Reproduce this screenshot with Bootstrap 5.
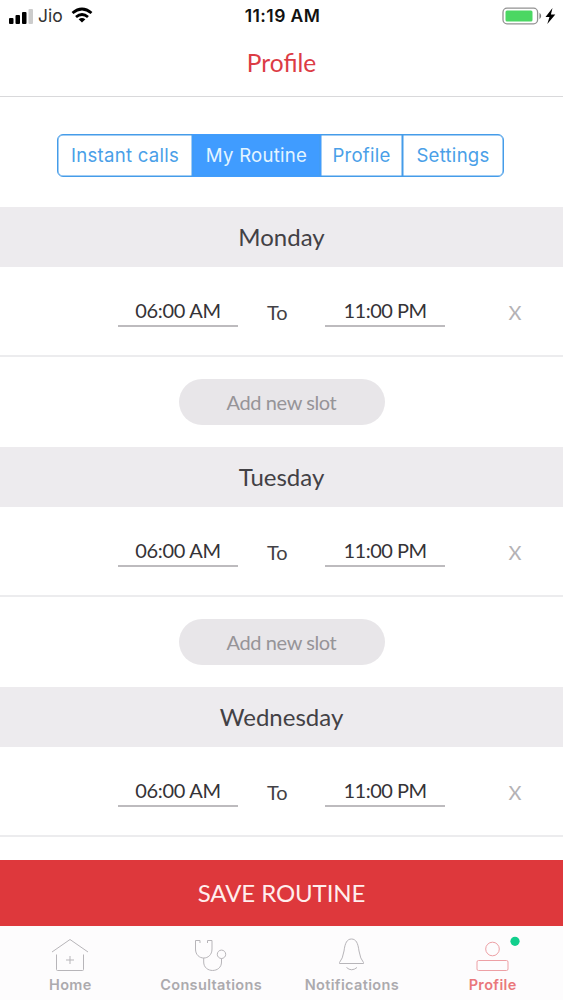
<!DOCTYPE html>
<html lang="en">
<head>
<meta charset="utf-8">
<meta name="viewport" content="width=device-width, initial-scale=1">
<title>Profile</title>
<link href="https://cdn.jsdelivr.net/npm/bootstrap@5.3.0/dist/css/bootstrap.min.css" rel="stylesheet">
<style>
body{height:1000px;font-family:Lato,sans-serif;color:#434145;background:#fff}
.status{height:31px;font-family:Inter,sans-serif;padding:0 7px 0 9px;color:#111;line-height:32px}
.status .side{width:130px}
.carrier{font-size:17.5px;color:#333}
.clock{font-size:17.5px;font-weight:600;letter-spacing:.4px;padding-right:0}
.title-bar{height:66px;border-bottom:1px solid #d9d9db;color:#dc3c45;font-size:24.5px;line-height:64px}
.segments{height:43px;margin:37px 60px 30px 57px;font-family:Inter,sans-serif}
.segments .btn{--bs-btn-color:#4a9fe8;--bs-btn-border-color:#459ce9;--bs-btn-active-color:#e4f5ff;--bs-btn-active-bg:#409cff;--bs-btn-active-border-color:#409cff;--bs-btn-border-radius:6px;--bs-btn-padding-x:0;--bs-btn-padding-y:0;font-size:18.6px;letter-spacing:.25px;line-height:39px;border-width:1.5px;box-shadow:inset 0 0 0 .5px #459ce9;flex:none;white-space:nowrap}
.day{height:60px;background:#edebee;font-size:24px;line-height:59px}
.slot{height:90px;border-bottom:2px solid #ececee;padding-left:118px;font-size:20px;line-height:28px}
.time{width:120px;height:31px;margin-top:1px;border-bottom:2px solid #bdbbbe;color:#353337;letter-spacing:-.3px}
.time + .to + .time{letter-spacing:-.5px}
.to{width:87px;padding-left:29px;padding-top:1px}
.remove{color:#b4b2b5;padding-left:63.5px;padding-top:1px}
.add-area{height:90px;padding-top:22px}
.add-area .btn{width:206px;height:46px;padding:0;background:#e8e6e9;color:#969498;font-size:20px;letter-spacing:-.4px;line-height:45px;border:0}
.save{height:66px;background:#de383c;color:#ffeeed;font-size:24px;letter-spacing:-.1px;line-height:66px;border-radius:0;border:0;padding:0}
.tabs{height:74px;background:#fdfcfd;font-family:Inter,sans-serif;font-size:14.5px;font-weight:600;color:#acaaae;letter-spacing:.35px}
.tabs a{color:inherit;text-decoration:none;padding-top:8px}
.tabs a.active{color:#ea777b}
.tabs svg{display:block;height:40px;width:48px;fill:none;stroke:#b7b5b9;stroke-width:1;overflow:visible}
.tabs a.active svg{stroke:#eda0a5}
.tabs span{line-height:22px}
</style>
</head>
<body class="d-flex flex-column overflow-hidden">
<header class="flex-shrink-0">
  <div class="status d-flex justify-content-between">
    <div class="side d-flex align-items-center">
      <svg width="25" height="16" viewBox="0 0 25 16"><rect y="10" width="4.5" height="6" rx="1"/><rect x="6.5" y="7" width="4.5" height="9" rx="1"/><rect x="13" y="4" width="4.5" height="12" rx="1"/><rect x="19.5" y="1" width="4.5" height="15" rx="1" fill="#ccc"/></svg>
      <span class="carrier ms-1">Jio</span>
      <svg class="ms-2" width="22" height="17" viewBox="0 0 22 17" fill="none" stroke="#000" stroke-width="2.8"><path d="M1.5 6Q11-2 20.5 6M5 10Q11 4.9 17 10"/><path d="M11 15.5 7.6 12.2Q11 9.6 14.4 12.2Z" fill="#000" stroke="none"/></svg>
    </div>
    <div class="clock">11:19 AM</div>
    <div class="side d-flex align-items-center justify-content-end">
      <svg width="55" height="18" viewBox="0 0 55 18"><rect x="2" y="1.2" width="34.6" height="15.6" rx="4" fill="#fff" stroke="#929292" stroke-width="1.3"/><rect x="4.5" y="3.5" width="27" height="11" rx="1.5" fill="#4bd763"/><path d="M38.5 5.8q3.4 3.2 0 6.4z" fill="#777"/><path d="m51.5 1-7 9h4l-2.2 7 8-9.5h-4.4z"/></svg>
    </div>
  </div>
  <div class="title-bar text-center">Profile</div>
</header>
<main class="flex-grow-1 overflow-hidden">
  <div class="segments btn-group d-flex">
    <button class="btn" style="width:136px">Instant calls</button>
    <button class="btn active" style="width:129px">My Routine</button>
    <button class="btn" style="width:83px">Profile</button>
    <button class="btn" style="width:102px">Settings</button>
  </div>
  <section>
    <div class="day text-center">Monday</div>
    <div class="slot d-flex align-items-center"><div class="time text-center">06:00 AM</div><div class="to">To</div><div class="time text-center">11:00 PM</div><div class="remove">X</div></div>
    <div class="add-area text-center"><button class="btn rounded-pill">Add new slot</button></div>
  </section>
  <section>
    <div class="day text-center">Tuesday</div>
    <div class="slot d-flex align-items-center"><div class="time text-center">06:00 AM</div><div class="to">To</div><div class="time text-center">11:00 PM</div><div class="remove">X</div></div>
    <div class="add-area text-center"><button class="btn rounded-pill">Add new slot</button></div>
  </section>
  <section>
    <div class="day text-center">Wednesday</div>
    <div class="slot d-flex align-items-center"><div class="time text-center">06:00 AM</div><div class="to">To</div><div class="time text-center">11:00 PM</div><div class="remove">X</div></div>
  </section>
</main>
<button class="save btn w-100 flex-shrink-0">SAVE ROUTINE</button>
<nav class="tabs row g-0 flex-shrink-0 text-center">
  <a href="#" class="col d-flex flex-column align-items-center"><svg viewBox="0 0 48 40"><path d="M6 18 24 5.5 42 18M10.5 20.5V35.5q0 1 1 1H36.5q1 0 1-1V20.5M20 26h8M24 22v8"/></svg><span>Home</span></a>
  <a href="#" class="col d-flex flex-column align-items-center"><svg viewBox="0 0 48 40"><path d="M13 9V6.5H8.5V15C8.5 27 25 27 25 15V6.5H20.5V9M16.7 24V28C16.7 39.3 34.5 39.3 34.5 28V24.5"/><circle cx="34.5" cy="20.3" r="4.2"/></svg><span>Consultations</span></a>
  <a href="#" class="col d-flex flex-column align-items-center"><svg viewBox="0 0 48 40"><path d="M11.5 28.5Q14.7 25 16 17C17 9 19 5 23.5 5S30 9 31 17Q32.3 25 35.5 28.5V29.5H11.5ZM18.5 33.5q5 4.5 10.5 0"/></svg><span>Notifications</span></a>
  <a href="#" class="active col d-flex flex-column align-items-center"><svg viewBox="0 0 48 40"><circle cx="23.5" cy="15" r="6.8"/><rect x="8" y="26.5" width="31" height="10" rx="1.5"/><circle cx="46" cy="7.3" r="4.6" fill="#12cf8d" stroke="none"/></svg><span>Profile</span></a>
</nav>
<script src="https://cdn.jsdelivr.net/npm/bootstrap@5.3.0/dist/js/bootstrap.bundle.min.js"></script>
</body>
</html>
